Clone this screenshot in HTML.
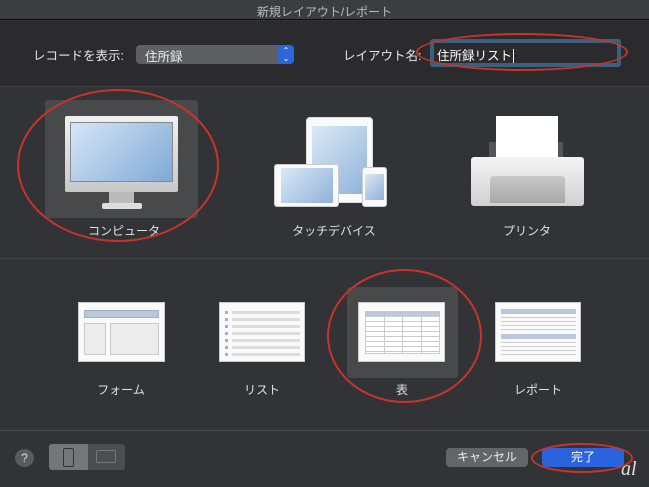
<!DOCTYPE html><html><head><meta charset="utf-8"><style>
*{margin:0;padding:0;box-sizing:border-box}
body{width:649px;height:487px;background:#313336;font-family:"Liberation Sans","Noto Sans CJK JP",sans-serif;color:#ddd;position:relative;overflow:hidden;font-size:12px}
.a{position:absolute}
.lbl{position:absolute;transform:translateX(-50%);font-size:12px;color:#e0e0e0;white-space:nowrap}
.card{position:absolute;background:#fafafa;border:1px solid #ccc}
.ell{position:absolute;border:2px solid #c8342a;border-radius:50%}
</style></head><body>
<div class="a" style="left:0;top:0;width:649px;height:20px;background:#3c3d40;border-bottom:1px solid #111"></div>
<div class="a" style="left:0;top:3px;width:649px;text-align:center;font-size:12px;color:#bbb">新規レイアウト/レポート</div>
<div class="a" style="left:0;top:21px;width:649px;height:66px;background:#2b2b2d;border-bottom:1px solid #3f4043"></div>
<div class="a" style="left:33px;top:45px;font-size:12.5px;color:#e6e6e6">レコードを表示:</div>
<div class="a" style="left:136px;top:45px;width:158px;height:19px;background:#5e5f61;border-radius:4px"></div>
<div class="a" style="left:145px;top:46px;font-size:12.5px;color:#eee">住所録</div>
<div class="a" style="left:278px;top:45px;width:16px;height:19px;background:#2c66d9;border-radius:0 4px 4px 0;color:#fff;font-size:8px;text-align:center;line-height:8px;padding-top:2px">⌃<br>⌄</div>
<div class="a" style="left:343px;top:45px;font-size:12.5px;color:#e6e6e6">レイアウト名:</div>
<div class="a" style="left:430px;top:39px;width:191px;height:28px;background:#3a5f80;border-radius:3px"></div>
<div class="a" style="left:434px;top:43px;width:183px;height:20px;background:#2b2b2d"></div>
<div class="a" style="left:437px;top:45px;font-size:12.5px;color:#fff">住所録リスト<span style="border-left:1px solid #fff;margin-left:1px"></span></div>
<div class="ell" style="left:416px;top:33px;width:212px;height:38px"></div>

<!-- devices -->
<div class="a" style="left:45px;top:100px;width:153px;height:118px;background:#48494b;border-radius:3px"></div>
<div class="a" style="left:65px;top:116px;width:113px;height:76px;background:linear-gradient(#f0f0f0,#c8c8c8);border-radius:2px"></div>
<div class="a" style="left:70px;top:122px;width:103px;height:60px;background:linear-gradient(135deg,#d6e6f7,#7fa9d6);border:1px solid #888"></div>
<div class="a" style="left:109px;top:192px;width:25px;height:11px;background:#bbb"></div>
<div class="a" style="left:102px;top:203px;width:40px;height:6px;background:#ddd;border-radius:2px"></div>
<div class="ell" style="left:17px;top:89px;width:202px;height:153px"></div>
<div class="lbl" style="left:124px;top:222px">コンピュータ</div>

<div class="a" style="left:306px;top:117px;width:67px;height:86px;background:#fafafa;border-radius:4px;border:1px solid #ddd"></div>
<div class="a" style="left:312px;top:126px;width:55px;height:68px;background:linear-gradient(135deg,#dbe8f6,#8fb2da)"></div>
<div class="a" style="left:274px;top:164px;width:65px;height:43px;background:#fafafa;border-radius:3px;border:1px solid #ccc"></div>
<div class="a" style="left:281px;top:168px;width:52px;height:35px;background:linear-gradient(135deg,#dbe8f6,#8fb2da)"></div>
<div class="a" style="left:362px;top:167px;width:25px;height:40px;background:#fafafa;border-radius:3px;border:1px solid #ccc"></div>
<div class="a" style="left:365px;top:174px;width:19px;height:26px;background:linear-gradient(135deg,#dbe8f6,#8fb2da)"></div>
<div class="lbl" style="left:334px;top:222px">タッチデバイス</div>

<div class="a" style="left:489px;top:142px;width:74px;height:16px;background:#555"></div>
<div class="a" style="left:496px;top:116px;width:62px;height:42px;background:#fff"></div>
<div class="a" style="left:471px;top:157px;width:113px;height:49px;background:linear-gradient(#f4f4f4,#d0d0d0);border-radius:3px"></div>
<div class="a" style="left:490px;top:176px;width:75px;height:27px;background:linear-gradient(#c8c8c8,#a8a8a8);border-radius:3px 3px 0 0"></div>
<div class="lbl" style="left:527px;top:222px">プリンタ</div>

<div class="a" style="left:0;top:258px;width:649px;height:1px;background:#444548"></div>

<!-- layouts -->
<div class="card" style="left:78px;top:302px;width:87px;height:60px">
 <div class="a" style="left:5px;top:7px;width:75px;height:8px;background:#b9c9da;border:1px solid #9fb0c2"></div>
 <div class="a" style="left:5px;top:20px;width:22px;height:32px;background:#ececec;border:1px solid #c8c8c8"></div>
 <div class="a" style="left:31px;top:20px;width:49px;height:32px;background:#ececec;border:1px solid #c8c8c8"></div>
</div>
<div class="lbl" style="left:121px;top:381px">フォーム</div>
<div class="card" style="left:219px;top:302px;width:86px;height:60px">
 <div class="a" style="left:5px;top:8px;width:75px;height:45px;background:repeating-linear-gradient(#ddd 0 3px,transparent 3px 7px)"></div>
 <div class="a" style="left:5px;top:8px;width:3px;height:45px;background:repeating-linear-gradient(#9bb3cc 0 3px,#fafafa 3px 7px)"></div>
 <div class="a" style="left:8px;top:8px;width:4px;height:45px;background:#fafafa"></div>
</div>
<div class="lbl" style="left:262px;top:381px">リスト</div>
<div class="a" style="left:347px;top:287px;width:111px;height:91px;background:#48494b;border-radius:3px"></div>
<div class="card" style="left:358px;top:302px;width:87px;height:60px">
 <div class="a" style="left:6px;top:8px;width:75px;height:5px;background:#b9c9da"></div>
 <div class="a" style="left:6px;top:13px;width:75px;height:38px;border:1px solid #ccc;background:repeating-linear-gradient(#fff 0 4px,#ccc 4px 5px),#fff"></div>
 <div class="a" style="left:25px;top:13px;width:19px;height:38px;border-left:1px solid #ccc;border-right:1px solid #ccc"></div>
 <div class="a" style="left:62px;top:13px;width:1px;height:38px;background:#ccc"></div>
</div>
<div class="ell" style="left:327px;top:269px;width:155px;height:134px"></div>
<div class="lbl" style="left:402px;top:381px">表</div>
<div class="card" style="left:495px;top:302px;width:86px;height:60px">
 <div class="a" style="left:5px;top:6px;width:75px;height:5px;background:#b9c9da"></div>
 <div class="a" style="left:5px;top:14px;width:75px;height:14px;background:repeating-linear-gradient(#ccc 0 1px,transparent 1px 4px)"></div>
 <div class="a" style="left:5px;top:31px;width:75px;height:5px;background:#b9c9da"></div>
 <div class="a" style="left:5px;top:39px;width:75px;height:14px;background:repeating-linear-gradient(#ccc 0 1px,transparent 1px 4px)"></div>
</div>
<div class="lbl" style="left:538px;top:381px">レポート</div>

<div class="a" style="left:0;top:430px;width:649px;height:1px;background:#4a4b4e"></div>
<div class="a" style="left:15px;top:449px;width:19px;height:18px;border-radius:50%;background:#5a5b5e;color:#ddd;text-align:center;font-size:12px;line-height:18px">?</div>
<div class="a" style="left:49px;top:444px;width:76px;height:26px;background:#4c4d50;border-radius:3px"></div>
<div class="a" style="left:49px;top:444px;width:39px;height:26px;background:#757679;border-radius:3px 0 0 3px"></div>
<div class="a" style="left:63px;top:448px;width:11px;height:19px;border:1.5px solid #333;border-radius:2px"></div>
<div class="a" style="left:96px;top:450px;width:20px;height:13px;border:1.5px solid #777;border-radius:2px"></div>
<div class="a" style="left:446px;top:448px;width:82px;height:19px;background:#646568;border-radius:4px;color:#eee;text-align:center;line-height:19px;font-size:12px">キャンセル</div>
<div class="a" style="left:542px;top:448px;width:82px;height:19px;background:#2a63dd;border-radius:4px;color:#fff;text-align:center;line-height:19px;font-size:12px">完了</div>
<div class="ell" style="left:531px;top:443px;width:102px;height:30px"></div>
<div class="a" style="left:621px;top:458px;font-size:20px;font-style:italic;color:#ddd;font-family:'Liberation Serif',serif">al</div>
</body></html>
